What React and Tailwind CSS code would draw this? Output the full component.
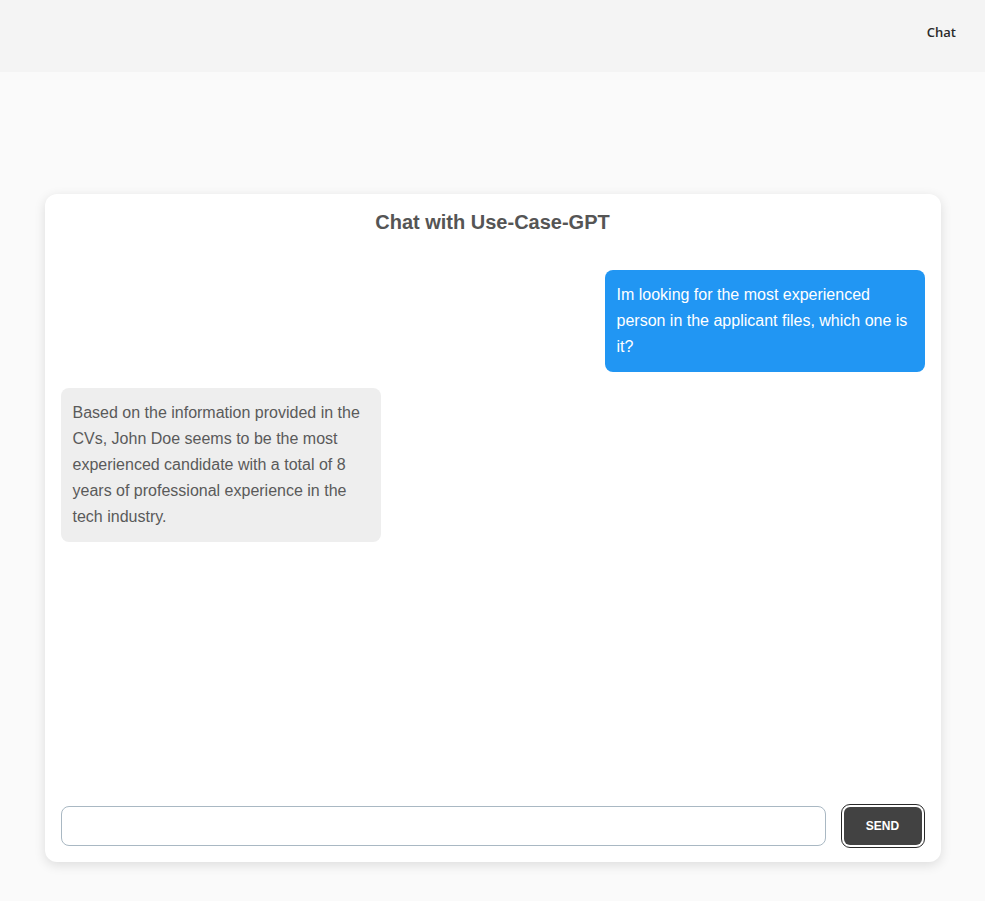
import React from 'react';

const messages = [
    {
        from: 'user',
        text: 'Im looking for the most experienced person in the applicant files, which one is it?',
    },
    {
        from: 'bot',
        text: 'Based on the information provided in the CVs, John Doe seems to be the most experienced candidate with a total of 8 years of professional experience in the tech industry.',
    },
];

const App = () => {
    return (
        <div className="min-h-screen bg-[#fafafa] font-['Liberation_Sans',Arial,sans-serif]">
            <header className="h-[72px] bg-[#f4f4f4] flex items-center justify-end pr-[29px] pb-[7px]">
                <span className="font-['Open_Sans',sans-serif] text-[13px] font-semibold text-[#2a2a2a]">
                    Chat
                </span>
            </header>

            <main className="pt-[122px]">
                <div className="w-[896px] h-[668px] mx-auto bg-white rounded-xl shadow-[0_3px_12px_rgba(0,0,0,0.12)] flex flex-col px-4 pt-4 pb-[14px]">
                    <h1 className="text-center text-[20px] leading-6 font-bold text-[#555555]">
                        Chat with Use-Case-GPT
                    </h1>

                    <div className="flex-1 flex flex-col gap-4 mt-9">
                        {messages.map((m, i) => (
                            <div
                                key={i}
                                className={
                                    m.from === 'user'
                                        ? 'self-end w-[320px] bg-[#2196f3] text-white rounded-lg p-3 text-[16px] leading-[26px]'
                                        : 'self-start w-[320px] bg-[#eeeeee] text-[#5a5a5a] rounded-lg p-3 text-[16px] leading-[26px]'
                                }
                            >
                                {m.text}
                            </div>
                        ))}
                    </div>

                    <div className="flex items-center gap-[15px]">
                        <input
                            type="text"
                            className="flex-1 h-10 rounded-lg border border-[#a9b8c3] bg-white px-3 text-[16px] outline-none"
                        />
                        <button className="w-[84px] h-[44px] rounded-[9px] border border-[#2a2a2a] bg-white p-[2px]">
                            <span className="flex h-full w-full items-center justify-center rounded-[6px] bg-[#424242] text-white text-[12px] font-bold">
                                SEND
                            </span>
                        </button>
                    </div>
                </div>
            </main>
        </div>
    );
};

export default App;
